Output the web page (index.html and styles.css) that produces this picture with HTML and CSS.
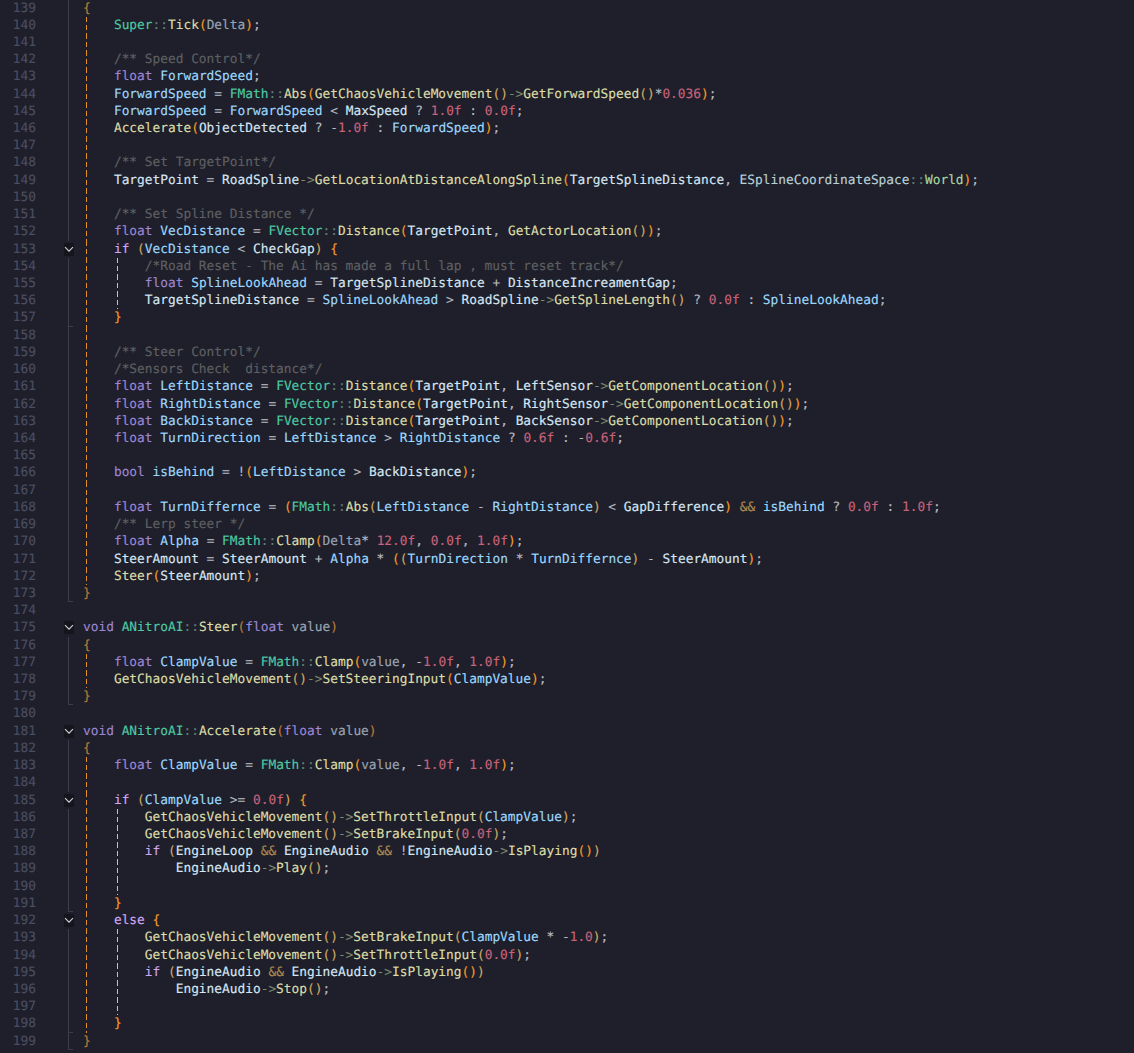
FILE: index.html
```html
<!DOCTYPE html>
<html lang="en">
<head>
<meta charset="utf-8">
<title>NitroAI.cpp</title>
<link rel="stylesheet" href="styles.css">
</head>
<body>
<main class="editor">
<svg class="defs" width="0" height="0"><symbol id="chev" viewBox="0 0 10 13"><path d="M1 4.2 5 8.2l4-4" fill="none" stroke="#d2d4da" stroke-width="1.1"/></symbol></svg>
<div class="line"><span class="num">139</span><span class="fold fl"></span><code class="code"><span class="bd">{</span></code></div>
<div class="line"><span class="num">140</span><span class="fold fl"></span><code class="code g1">    <span class="t">Super</span><span class="s">::</span><span class="f">Tick</span><span class="b">(</span><span class="a">Delta</span><span class="b">)</span><span class="o">;</span></code></div>
<div class="line"><span class="num">141</span><span class="fold fl"></span><code class="code g1"></code></div>
<div class="line"><span class="num">142</span><span class="fold fl"></span><code class="code g1">    <span class="c">/** Speed Control*/</span></code></div>
<div class="line"><span class="num">143</span><span class="fold fl"></span><code class="code g1">    <span class="k">float</span> <span class="v">ForwardSpeed</span><span class="o">;</span></code></div>
<div class="line"><span class="num">144</span><span class="fold fl"></span><code class="code g1">    <span class="v">ForwardSpeed</span> <span class="o">=</span> <span class="t">FMath</span><span class="s">::</span><span class="f">Abs</span><span class="b">(</span><span class="f">GetChaosVehicleMovement</span><span class="y">()</span><span class="r">-&gt;</span><span class="f">GetForwardSpeed</span><span class="y">()</span><span class="o">*</span><span class="n">0.036</span><span class="b">)</span><span class="o">;</span></code></div>
<div class="line"><span class="num">145</span><span class="fold fl"></span><code class="code g1">    <span class="v">ForwardSpeed</span> <span class="o">=</span> <span class="v">ForwardSpeed</span> <span class="o">&lt;</span> <span class="m">MaxSpeed</span> <span class="o">?</span> <span class="n">1.0f</span> <span class="o">:</span> <span class="n">0.0f</span><span class="o">;</span></code></div>
<div class="line"><span class="num">146</span><span class="fold fl"></span><code class="code g1">    <span class="f">Accelerate</span><span class="b">(</span><span class="m">ObjectDetected</span> <span class="o">?</span> <span class="o">-</span><span class="n">1.0f</span> <span class="o">:</span> <span class="v">ForwardSpeed</span><span class="b">)</span><span class="o">;</span></code></div>
<div class="line"><span class="num">147</span><span class="fold fl"></span><code class="code g1"></code></div>
<div class="line"><span class="num">148</span><span class="fold fl"></span><code class="code g1">    <span class="c">/** Set TargetPoint*/</span></code></div>
<div class="line"><span class="num">149</span><span class="fold fl"></span><code class="code g1">    <span class="m">TargetPoint</span> <span class="o">=</span> <span class="m">RoadSpline</span><span class="r">-&gt;</span><span class="f">GetLocationAtDistanceAlongSpline</span><span class="b">(</span><span class="m">TargetSplineDistance</span><span class="o">,</span> <span class="e">ESplineCoordinateSpace</span><span class="s">::</span><span class="w">World</span><span class="b">)</span><span class="o">;</span></code></div>
<div class="line"><span class="num">150</span><span class="fold fl"></span><code class="code g1"></code></div>
<div class="line"><span class="num">151</span><span class="fold fl"></span><code class="code g1">    <span class="c">/** Set Spline Distance */</span></code></div>
<div class="line"><span class="num">152</span><span class="fold fl"></span><code class="code g1">    <span class="k">float</span> <span class="v">VecDistance</span> <span class="o">=</span> <span class="t">FVector</span><span class="s">::</span><span class="f">Distance</span><span class="b">(</span><span class="m">TargetPoint</span><span class="o">,</span> <span class="f">GetActorLocation</span><span class="y">()</span><span class="b">)</span><span class="o">;</span></code></div>
<div class="line"><span class="num">153</span><span class="fold"><svg class="chev"><use href="#chev"/></svg></span><code class="code g1">    <span class="i">if</span> <span class="y">(</span><span class="v">VecDistance</span> <span class="o">&lt;</span> <span class="m">CheckGap</span><span class="y">)</span> <span class="b">{</span></code></div>
<div class="line"><span class="num">154</span><span class="fold fl"></span><code class="code g1 g2">        <span class="c">/*Road Reset - The Ai has made a full lap , must reset track*/</span></code></div>
<div class="line"><span class="num">155</span><span class="fold fl"></span><code class="code g1 g2">        <span class="k">float</span> <span class="v">SplineLookAhead</span> <span class="o">=</span> <span class="m">TargetSplineDistance</span> <span class="o">+</span> <span class="m">DistanceIncreamentGap</span><span class="o">;</span></code></div>
<div class="line"><span class="num">156</span><span class="fold fl"></span><code class="code g1 g2">        <span class="m">TargetSplineDistance</span> <span class="o">=</span> <span class="v">SplineLookAhead</span> <span class="o">&gt;</span> <span class="m">RoadSpline</span><span class="r">-&gt;</span><span class="f">GetSplineLength</span><span class="y">()</span> <span class="o">?</span> <span class="n">0.0f</span> <span class="o">:</span> <span class="v">SplineLookAhead</span><span class="o">;</span></code></div>
<div class="line"><span class="num">157</span><span class="fold fl fe"></span><code class="code g1">    <span class="b">}</span></code></div>
<div class="line"><span class="num">158</span><span class="fold fl"></span><code class="code g1"></code></div>
<div class="line"><span class="num">159</span><span class="fold fl"></span><code class="code g1">    <span class="c">/** Steer Control*/</span></code></div>
<div class="line"><span class="num">160</span><span class="fold fl"></span><code class="code g1">    <span class="c">/*Sensors Check  distance*/</span></code></div>
<div class="line"><span class="num">161</span><span class="fold fl"></span><code class="code g1">    <span class="k">float</span> <span class="v">LeftDistance</span> <span class="o">=</span> <span class="t">FVector</span><span class="s">::</span><span class="f">Distance</span><span class="b">(</span><span class="m">TargetPoint</span><span class="o">,</span> <span class="m">LeftSensor</span><span class="r">-&gt;</span><span class="f">GetComponentLocation</span><span class="y">()</span><span class="b">)</span><span class="o">;</span></code></div>
<div class="line"><span class="num">162</span><span class="fold fl"></span><code class="code g1">    <span class="k">float</span> <span class="v">RightDistance</span> <span class="o">=</span> <span class="t">FVector</span><span class="s">::</span><span class="f">Distance</span><span class="b">(</span><span class="m">TargetPoint</span><span class="o">,</span> <span class="m">RightSensor</span><span class="r">-&gt;</span><span class="f">GetComponentLocation</span><span class="y">()</span><span class="b">)</span><span class="o">;</span></code></div>
<div class="line"><span class="num">163</span><span class="fold fl"></span><code class="code g1">    <span class="k">float</span> <span class="v">BackDistance</span> <span class="o">=</span> <span class="t">FVector</span><span class="s">::</span><span class="f">Distance</span><span class="b">(</span><span class="m">TargetPoint</span><span class="o">,</span> <span class="m">BackSensor</span><span class="r">-&gt;</span><span class="f">GetComponentLocation</span><span class="y">()</span><span class="b">)</span><span class="o">;</span></code></div>
<div class="line"><span class="num">164</span><span class="fold fl"></span><code class="code g1">    <span class="k">float</span> <span class="v">TurnDirection</span> <span class="o">=</span> <span class="v">LeftDistance</span> <span class="o">&gt;</span> <span class="v">RightDistance</span> <span class="o">?</span> <span class="n">0.6f</span> <span class="o">:</span> <span class="o">-</span><span class="n">0.6f</span><span class="o">;</span></code></div>
<div class="line"><span class="num">165</span><span class="fold fl"></span><code class="code g1"></code></div>
<div class="line"><span class="num">166</span><span class="fold fl"></span><code class="code g1">    <span class="k">bool</span> <span class="v">isBehind</span> <span class="o">=</span> <span class="o">!</span><span class="b">(</span><span class="v">LeftDistance</span> <span class="o">&gt;</span> <span class="m">BackDistance</span><span class="b">)</span><span class="o">;</span></code></div>
<div class="line"><span class="num">167</span><span class="fold fl"></span><code class="code g1"></code></div>
<div class="line"><span class="num">168</span><span class="fold fl"></span><code class="code g1">    <span class="k">float</span> <span class="v">TurnDiffernce</span> <span class="o">=</span> <span class="b">(</span><span class="t">FMath</span><span class="s">::</span><span class="f">Abs</span><span class="y">(</span><span class="v">LeftDistance</span> <span class="o">-</span> <span class="v">RightDistance</span><span class="y">)</span> <span class="o">&lt;</span> <span class="m">GapDifference</span><span class="b">)</span> <span class="a2">&amp;&amp;</span> <span class="v">isBehind</span> <span class="o">?</span> <span class="n">0.0f</span> <span class="o">:</span> <span class="n">1.0f</span><span class="o">;</span></code></div>
<div class="line"><span class="num">169</span><span class="fold fl"></span><code class="code g1">    <span class="c">/** Lerp steer */</span></code></div>
<div class="line"><span class="num">170</span><span class="fold fl"></span><code class="code g1">    <span class="k">float</span> <span class="v">Alpha</span> <span class="o">=</span> <span class="t">FMath</span><span class="s">::</span><span class="f">Clamp</span><span class="b">(</span><span class="a">Delta</span><span class="o">*</span> <span class="n">12.0f</span><span class="o">,</span> <span class="n">0.0f</span><span class="o">,</span> <span class="n">1.0f</span><span class="b">)</span><span class="o">;</span></code></div>
<div class="line"><span class="num">171</span><span class="fold fl"></span><code class="code g1">    <span class="m">SteerAmount</span> <span class="o">=</span> <span class="m">SteerAmount</span> <span class="o">+</span> <span class="v">Alpha</span> <span class="o">*</span> <span class="b">(</span><span class="y">(</span><span class="v">TurnDirection</span> <span class="o">*</span> <span class="v">TurnDiffernce</span><span class="y">)</span> <span class="o">-</span> <span class="m">SteerAmount</span><span class="b">)</span><span class="o">;</span></code></div>
<div class="line"><span class="num">172</span><span class="fold fl"></span><code class="code g1">    <span class="f">Steer</span><span class="b">(</span><span class="m">SteerAmount</span><span class="b">)</span><span class="o">;</span></code></div>
<div class="line"><span class="num">173</span><span class="fold fl fe"></span><code class="code"><span class="bd">}</span></code></div>
<div class="line"><span class="num">174</span><span class="fold"></span><code class="code"></code></div>
<div class="line"><span class="num">175</span><span class="fold"><svg class="chev"><use href="#chev"/></svg></span><code class="code"><span class="k">void</span> <span class="t">ANitroAI</span><span class="s">::</span><span class="f">Steer</span><span class="bd">(</span><span class="k">float</span> <span class="a">value</span><span class="bd">)</span></code></div>
<div class="line"><span class="num">176</span><span class="fold fl"></span><code class="code"><span class="bd">{</span></code></div>
<div class="line"><span class="num">177</span><span class="fold fl"></span><code class="code g1">    <span class="k">float</span> <span class="v">ClampValue</span> <span class="o">=</span> <span class="t">FMath</span><span class="s">::</span><span class="f">Clamp</span><span class="b">(</span><span class="a">value</span><span class="o">,</span> <span class="o">-</span><span class="n">1.0f</span><span class="o">,</span> <span class="n">1.0f</span><span class="b">)</span><span class="o">;</span></code></div>
<div class="line"><span class="num">178</span><span class="fold fl"></span><code class="code g1">    <span class="f">GetChaosVehicleMovement</span><span class="y">()</span><span class="r">-&gt;</span><span class="f">SetSteeringInput</span><span class="b">(</span><span class="v">ClampValue</span><span class="b">)</span><span class="o">;</span></code></div>
<div class="line"><span class="num">179</span><span class="fold fl fe"></span><code class="code"><span class="bd">}</span></code></div>
<div class="line"><span class="num">180</span><span class="fold"></span><code class="code"></code></div>
<div class="line"><span class="num">181</span><span class="fold"><svg class="chev"><use href="#chev"/></svg></span><code class="code"><span class="k">void</span> <span class="t">ANitroAI</span><span class="s">::</span><span class="f">Accelerate</span><span class="bd">(</span><span class="k">float</span> <span class="a">value</span><span class="bd">)</span></code></div>
<div class="line"><span class="num">182</span><span class="fold fl"></span><code class="code"><span class="bd">{</span></code></div>
<div class="line"><span class="num">183</span><span class="fold fl"></span><code class="code g1">    <span class="k">float</span> <span class="v">ClampValue</span> <span class="o">=</span> <span class="t">FMath</span><span class="s">::</span><span class="f">Clamp</span><span class="b">(</span><span class="a">value</span><span class="o">,</span> <span class="o">-</span><span class="n">1.0f</span><span class="o">,</span> <span class="n">1.0f</span><span class="b">)</span><span class="o">;</span></code></div>
<div class="line"><span class="num">184</span><span class="fold fl"></span><code class="code g1"></code></div>
<div class="line"><span class="num">185</span><span class="fold"><svg class="chev"><use href="#chev"/></svg></span><code class="code g1">    <span class="i">if</span> <span class="y">(</span><span class="v">ClampValue</span> <span class="o">&gt;=</span> <span class="n">0.0f</span><span class="y">)</span> <span class="b">{</span></code></div>
<div class="line"><span class="num">186</span><span class="fold fl"></span><code class="code g1 g2">        <span class="f">GetChaosVehicleMovement</span><span class="y">()</span><span class="r">-&gt;</span><span class="f">SetThrottleInput</span><span class="y">(</span><span class="v">ClampValue</span><span class="y">)</span><span class="o">;</span></code></div>
<div class="line"><span class="num">187</span><span class="fold fl"></span><code class="code g1 g2">        <span class="f">GetChaosVehicleMovement</span><span class="y">()</span><span class="r">-&gt;</span><span class="f">SetBrakeInput</span><span class="y">(</span><span class="n">0.0f</span><span class="y">)</span><span class="o">;</span></code></div>
<div class="line"><span class="num">188</span><span class="fold fl"></span><code class="code g1 g2">        <span class="i">if</span> <span class="y">(</span><span class="m">EngineLoop</span> <span class="a2">&amp;&amp;</span> <span class="m">EngineAudio</span> <span class="a2">&amp;&amp;</span> <span class="o">!</span><span class="m">EngineAudio</span><span class="r">-&gt;</span><span class="f">IsPlaying</span><span class="b">()</span><span class="y">)</span></code></div>
<div class="line"><span class="num">189</span><span class="fold fl"></span><code class="code g1 g2">            <span class="m">EngineAudio</span><span class="r">-&gt;</span><span class="f">Play</span><span class="y">()</span><span class="o">;</span></code></div>
<div class="line"><span class="num">190</span><span class="fold fl"></span><code class="code g1 g2"></code></div>
<div class="line"><span class="num">191</span><span class="fold fl fe"></span><code class="code g1">    <span class="b">}</span></code></div>
<div class="line"><span class="num">192</span><span class="fold"><svg class="chev"><use href="#chev"/></svg></span><code class="code g1">    <span class="i">else</span> <span class="b">{</span></code></div>
<div class="line"><span class="num">193</span><span class="fold fl"></span><code class="code g1 g2">        <span class="f">GetChaosVehicleMovement</span><span class="y">()</span><span class="r">-&gt;</span><span class="f">SetBrakeInput</span><span class="y">(</span><span class="v">ClampValue</span> <span class="o">*</span> <span class="o">-</span><span class="n">1.0</span><span class="y">)</span><span class="o">;</span></code></div>
<div class="line"><span class="num">194</span><span class="fold fl"></span><code class="code g1 g2">        <span class="f">GetChaosVehicleMovement</span><span class="y">()</span><span class="r">-&gt;</span><span class="f">SetThrottleInput</span><span class="y">(</span><span class="n">0.0f</span><span class="y">)</span><span class="o">;</span></code></div>
<div class="line"><span class="num">195</span><span class="fold fl"></span><code class="code g1 g2">        <span class="i">if</span> <span class="y">(</span><span class="m">EngineAudio</span> <span class="a2">&amp;&amp;</span> <span class="m">EngineAudio</span><span class="r">-&gt;</span><span class="f">IsPlaying</span><span class="b">()</span><span class="y">)</span></code></div>
<div class="line"><span class="num">196</span><span class="fold fl"></span><code class="code g1 g2">            <span class="m">EngineAudio</span><span class="r">-&gt;</span><span class="f">Stop</span><span class="y">()</span><span class="o">;</span></code></div>
<div class="line"><span class="num">197</span><span class="fold fl"></span><code class="code g1 g2"></code></div>
<div class="line"><span class="num">198</span><span class="fold fl fe"></span><code class="code g1">    <span class="b">}</span></code></div>
<div class="line"><span class="num">199</span><span class="fold fl fe"></span><code class="code"><span class="bd">}</span></code></div>
</main>
</body>
</html>
```
FILE: styles.css
```css
html, body {
  margin: 0;
  padding: 0;
  height: 1053px;
  overflow: hidden;
  background: #1e1f2a;
}
.editor {
  margin-top: -0.5px;
  font-family: "DejaVu Sans Mono", "Liberation Mono", monospace;
  font-size: 12.83px;
  text-rendering: geometricPrecision;
  -webkit-text-stroke: 0.15px;
  color: #d4dce6;
}
.defs { display: block; }
.line {
  display: grid;
  grid-template-columns: 36px 24px 16px 7px 1fr;
  height: 17.23px;
  line-height: 17.23px;
}
.num {
  grid-column: 1;
  text-align: right;
  color: #4b4e63;
}
.fold {
  grid-column: 3;
  display: flex;
  justify-content: center;
  align-items: center;
  background-repeat: no-repeat;
}
.fl {
  background-image: linear-gradient(#3b3d4e, #3b3d4e);
  background-position: 8px 0;
  background-size: 1px 100%;
}
.fe {
  background-image: linear-gradient(#3b3d4e, #3b3d4e), linear-gradient(#3b3d4e, #3b3d4e);
  background-position: 8px 0, 8px 100%;
  background-size: 1px 100%, 5px 1px;
}
.chev {
  width: 10px;
  height: 13px;
  background: #15161d;
  margin-left: 1px;
}
.code {
  grid-column: 5;
  font: inherit;
  white-space: pre;
  background-repeat: no-repeat;
}
.g1 {
  background-image: repeating-linear-gradient(#e58e2c 0 5px, transparent 5px 8px);
  background-position: 3px 0;
  background-size: 1px 100%;
}
.g1.g2 {
  background-image: repeating-linear-gradient(#e58e2c 0 5px, transparent 5px 8px), repeating-linear-gradient(#f2c230 0 5px, transparent 5px 8px);
  background-position: 3px 0, 34px 0;
  background-size: 1px 100%, 1px 100%;
}
.k { color: #9d86d4; }
.i { color: #cfa6f2; }
.t { color: #4ec9a4; }
.f { color: #dcdca8; }
.v { color: #9cd8fe; }
.m { color: #d6e6f4; }
.a { color: #9aa5b4; }
.e { color: #b8d0d8; }
.w { color: #a8d8a0; }
.n { color: #c9637c; }
.c { color: #5f5f62; }
.o { color: #b8bac0; }
.a2 { color: #b08a50; }
.s { color: #5f7f78; }
.r { color: #7f8a6c; }
.b { color: #f59a23; }
.y { color: #cfa862; }
.bd { color: #bb7a38; }
```
